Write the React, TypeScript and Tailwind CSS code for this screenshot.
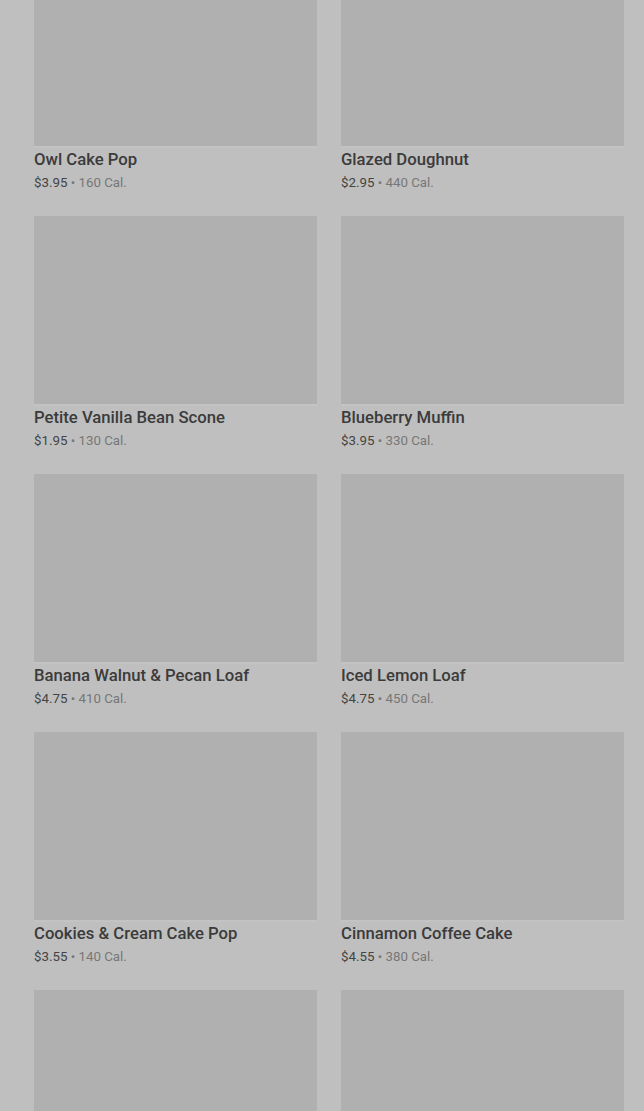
import React from "react";

interface Item {
  name: string;
  price: string;
  cal: string;
}

const items: Item[] = [
  { name: "Owl Cake Pop", price: "$3.95", cal: "160 Cal." },
  { name: "Glazed Doughnut", price: "$2.95", cal: "440 Cal." },
  { name: "Petite Vanilla Bean Scone", price: "$1.95", cal: "130 Cal." },
  { name: "Blueberry Muffin", price: "$3.95", cal: "330 Cal." },
  { name: "Banana Walnut & Pecan Loaf", price: "$4.75", cal: "410 Cal." },
  { name: "Iced Lemon Loaf", price: "$4.75", cal: "450 Cal." },
  { name: "Cookies & Cream Cake Pop", price: "$3.55", cal: "140 Cal." },
  { name: "Cinnamon Coffee Cake", price: "$4.55", cal: "380 Cal." },
  { name: "", price: "", cal: "" },
  { name: "", price: "", cal: "" },
];

const ProductCard: React.FC<{ item: Item }> = ({ item }) => (
  <div className="flex flex-col">
    <div className="h-[188px] bg-[#b0b0b0]" />
    <div className="h-[2px] bg-[#c3c3c3]" />
    {item.name && (
      <>
        <p className="mt-[1px] text-[16.7px] leading-[22px] font-medium text-[#3b3b3b]">
          {item.name}
        </p>
        <p className="mt-[2px] text-[13.3px] leading-[20px] text-[#444]">
          {item.price}
          <span className="text-[#777]"> • {item.cal}</span>
        </p>
      </>
    )}
  </div>
);

export default function App() {
  return (
    <div
      className="h-[1111px] overflow-hidden bg-[#bfbfbf] pl-[34px] pr-[20px]"
      style={{ fontFamily: "Roboto, 'Liberation Sans', sans-serif" }}
    >
      <div className="-mt-[42px] grid grid-cols-2 gap-x-[24px] gap-y-[23px]">
        {items.map((item, i) => (
          <ProductCard key={i} item={item} />
        ))}
      </div>
    </div>
  );
}
